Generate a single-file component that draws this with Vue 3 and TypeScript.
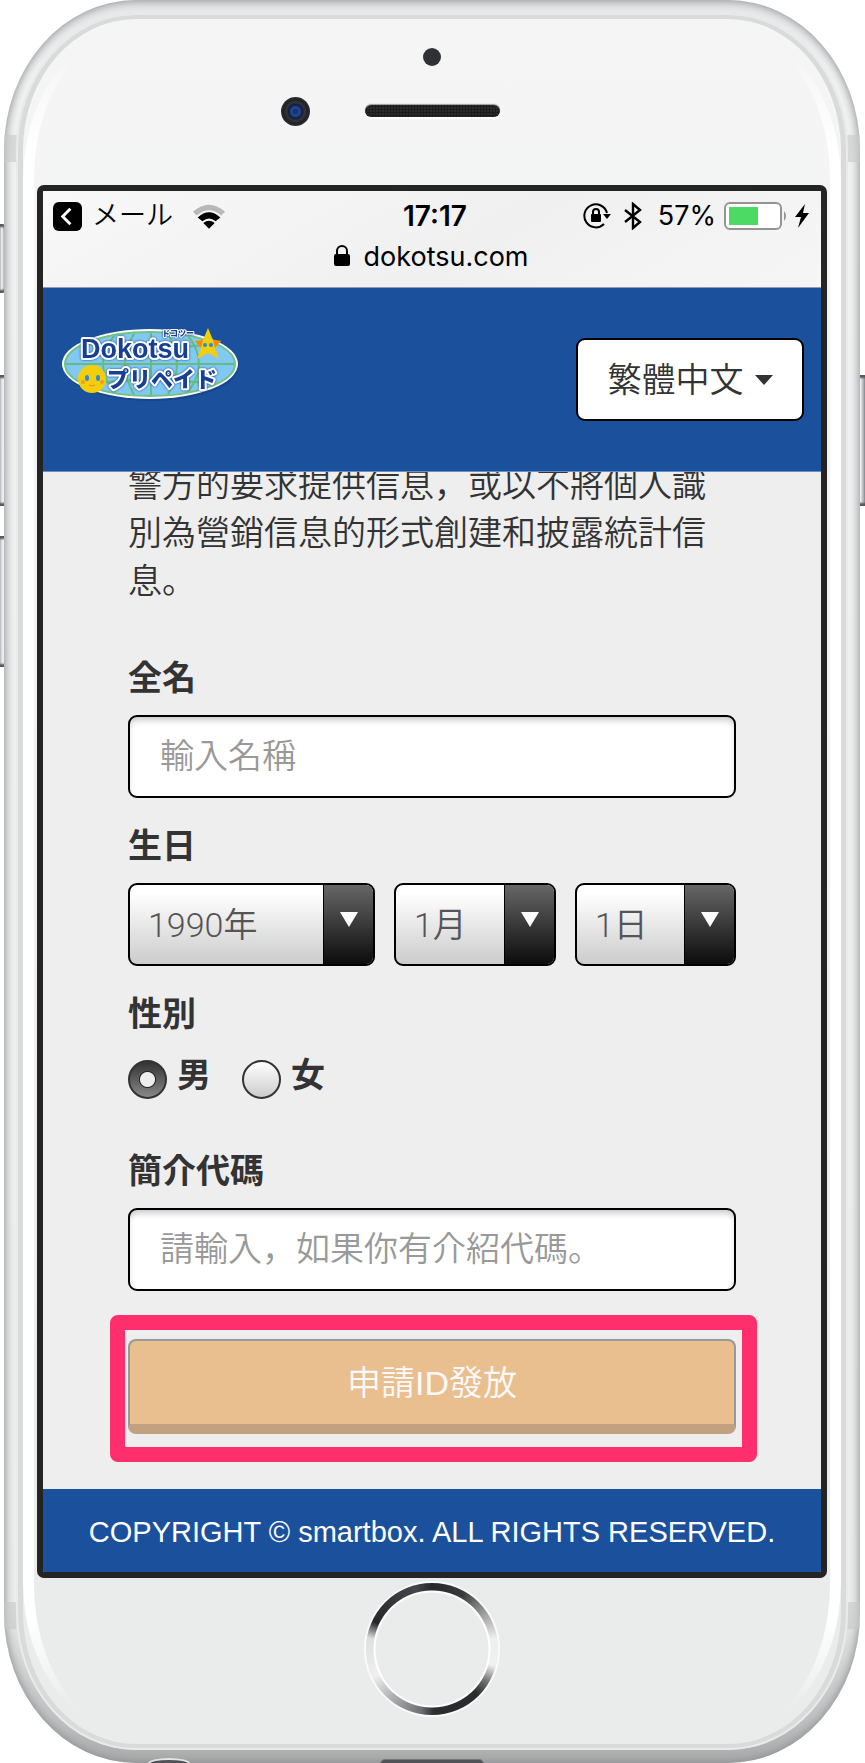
<script setup lang="ts">
import { ref } from 'vue'

interface DateField {
  id: string
  label: string
  value: string
  options: string[]
}

const fullName = ref('')
const referral = ref('')
const gender = ref('male')

const dateFields = ref<DateField[]>([
  { id: 'year', label: '年', value: '1990年', options: ['1989年', '1990年', '1991年'] },
  { id: 'month', label: '月', value: '1月', options: ['1月', '2月', '3月'] },
  { id: 'day', label: '日', value: '1日', options: ['1日', '2日', '3日'] },
])

const genders = [
  { value: 'male', label: '男' },
  { value: 'female', label: '女' },
]
</script>

<template>
  <div class="stage">
    <span class="side-key mute"></span>
    <span class="side-key volume-up"></span>
    <span class="side-key volume-down"></span>
    <span class="side-key power"></span>

    <div class="phone">
      <span class="antenna top-band"></span>
      <span class="antenna bottom-band"></span>
      <div class="rim">
        <div class="glass">
          <div class="forehead">
            <span class="sensor"></span>
            <span class="camera"></span>
            <span class="speaker"></span>
          </div>

          <div class="screen">
            <div class="browser-bar">
              <div class="status">
                <div class="status-side">
                  <svg class="back" viewBox="0 0 30 30" aria-hidden="true">
                    <rect width="30" height="30" rx="6" />
                    <path d="M18 7 L10 15 L18 23" fill="none" stroke="#fff" stroke-width="3" />
                  </svg>
                  <span class="app-name">メール</span>
                  <svg class="wifi" viewBox="0 0 36 26" aria-hidden="true">
                    <path d="M1 8 Q18 -7 35 8 L31 12 Q18 1 5 12 Z" fill="#b8b8b8" />
                    <path d="M6 14 Q18 3 30 14 L25 18 Q18 12 11 18 Z" />
                    <path d="M12 20 Q18 15 24 20 L18 26 Z" />
                  </svg>
                </div>
                <time class="clock">17:17</time>
                <div class="status-side end">
                  <svg class="rotation" viewBox="0 0 28 26" aria-hidden="true">
                    <path d="M21 21 A11.500 11.500 0 1 1 24 10" fill="none" stroke="#000" stroke-width="2" />
                    <path d="M20 11 H28 L24 16 Z" />
                    <rect x="8" y="11" width="10" height="8" rx="1" />
                    <path d="M10 11 V9 a3 3 0 0 1 6 0 V11" fill="none" stroke="#000" stroke-width="2" />
                  </svg>
                  <svg class="bluetooth" viewBox="0 0 18 28" aria-hidden="true">
                    <path d="M1 8 L16 20 L9 26 V2 L16 8 L1 20" fill="none" stroke="#000" stroke-width="2.400" />
                  </svg>
                  <span class="percent">57%</span>
                  <svg class="battery" viewBox="0 0 64 28" aria-hidden="true">
                    <rect x="1" y="1" width="56" height="26" rx="5" fill="#fff" stroke="#949494" stroke-width="2" />
                    <rect x="5" y="5" width="29" height="18" fill="#4cd964" />
                    <path d="M60 9 q4 5 0 10 Z" fill="#949494" />
                  </svg>
                  <svg class="bolt" viewBox="0 0 14 24" aria-hidden="true">
                    <path d="M10 0 L0 13 H6 L3 24 L14 9 H8 Z" />
                  </svg>
                </div>
              </div>
              <div class="address">
                <svg class="lock" viewBox="0 0 16 22" aria-hidden="true">
                  <rect y="9" width="16" height="12" rx="2" />
                  <path d="M3 10 V6 a5 5 0 0 1 10 0 V10" fill="none" stroke="#000" stroke-width="2" />
                </svg>
                <span>dokotsu.com</span>
              </div>
            </div>

            <header class="site-header">
              <a class="logo" href="#" aria-label="Dokotsu プリペイド">
                <svg viewBox="0 0 180 76">
                  <defs>
                    <clipPath id="globe"><ellipse cx="89" cy="38" rx="84" ry="31" /></clipPath>
                  </defs>
                  <ellipse cx="90" cy="40" rx="88" ry="35" fill="#123c7e" opacity="0.500" />
                  <ellipse cx="89" cy="38" rx="88" ry="35" fill="#fff" />
                  <ellipse cx="89" cy="38" rx="85" ry="32" fill="#82c8f4" stroke="#72c282" stroke-width="2" />
                  <g clip-path="url(#globe)" fill="none" stroke="#64bd79" stroke-width="2">
                    <path d="M0 38 H180 M20 17 Q90 27 160 17 M20 59 Q90 49 160 59" />
                    <path d="M90 0 V76 M62 0 Q22 38 62 76 M78 0 Q50 38 78 76 M102 0 Q130 38 102 76 M118 0 Q158 38 118 76" />
                  </g>
                  <g class="logo-text" aria-hidden="true">
                    <text class="latin" x="20" y="32">Dokotsu</text>
                    <text class="ruby" x="101" y="10">ドコツー</text>
                    <text class="kana" x="46" y="61">プリペイド</text>
                  </g>
                  <path d="M147 2 L152 14 L160 15 L154 22 L158 33 L147 27 L136 33 L140 22 L134 15 L142 14 Z" fill="#f3ce0c" />
                  <path d="M134 15 L142 14 L140 22 Z M160 15 L152 14 L154 22 Z" fill="#ee8a16" />
                  <circle cx="144" cy="19" r="2" fill="#2a8ad8" />
                  <circle cx="150" cy="19" r="2" fill="#2a8ad8" />
                  <circle cx="31" cy="53" r="14" fill="#f3ce0c" />
                  <ellipse cx="26" cy="52" rx="2" ry="3" fill="#2a8ad8" />
                  <ellipse cx="37" cy="52" rx="2" ry="3" fill="#2a8ad8" />
                  <path d="M28 59 q3 2 6 0" fill="none" stroke="#ee8a16" />
                  <circle cx="22" cy="56" r="2" fill="#f39b28" />
                  <circle cx="41" cy="56" r="2" fill="#f39b28" />
                </svg>
              </a>
              <button class="language" type="button">
                <span>繁體中文</span>
                <svg viewBox="0 0 18 10" aria-hidden="true"><path d="M0 0 H18 L9 10 Z" fill="#333" /></svg>
              </button>
            </header>

            <main class="page">
              <p class="policy">警方的要求提供信息，或以不將個人識別為營銷信息的形式創建和披露統計信息。</p>

              <form class="form" @submit.prevent>
                <div class="field">
                  <label class="caption" for="full-name">全名</label>
                  <input id="full-name" v-model="fullName" class="text-box" type="text" placeholder="輸入名稱" />
                </div>

                <fieldset class="field">
                  <legend class="caption">生日</legend>
                  <div class="dates">
                    <div v-for="field in dateFields" :key="field.id" class="picker">
                      <select v-model="field.value" :aria-label="field.label">
                        <option v-for="option in field.options" :key="option">{{ option }}</option>
                      </select>
                      <span class="picker-arrow">
                        <svg viewBox="0 0 18 15" aria-hidden="true"><path d="M0 0 H18 L9 15 Z" fill="#fff" /></svg>
                      </span>
                    </div>
                  </div>
                </fieldset>

                <fieldset class="field gender">
                  <legend class="caption">性別</legend>
                  <div class="choices">
                    <label v-for="item in genders" :key="item.value" class="choice">
                      <input v-model="gender" type="radio" name="gender" :value="item.value" />
                      <span>{{ item.label }}</span>
                    </label>
                  </div>
                </fieldset>

                <div class="field">
                  <label class="caption" for="referral">簡介代碼</label>
                  <input id="referral" v-model="referral" class="text-box" type="text" placeholder="請輸入，如果你有介紹代碼。" />
                </div>

                <div class="highlight">
                  <button class="submit" type="submit">申請ID發放</button>
                </div>
              </form>
            </main>

            <footer class="site-footer">COPYRIGHT © smartbox. ALL RIGHTS RESERVED.</footer>
          </div>

          <div class="chin">
            <span class="home"></span>
          </div>
        </div>
      </div>
      <span class="jack"></span>
      <span class="port"></span>
    </div>
  </div>
</template>

<style>
body {
  background: #fff;
}
</style>

<style scoped>
* {
  box-sizing: border-box;
}

.stage {
  position: relative;
  padding: 0 5px 0 4px;
  overflow: hidden;
  color: #333;
  font-family: "Liberation Sans", "Noto Sans CJK JP", "Noto Sans CJK TC", sans-serif;
}

/* Handset body */
.side-key {
  position: absolute;
  left: 0;
  width: 8px;
  border-radius: 0 3px 3px 0;
  background: linear-gradient(90deg, #c4c6c9, #f4f4f4 40%, #8d9094);
  box-shadow: inset 0 4px 2px -1px #55585c, inset 0 -4px 2px -1px #55585c;
}

.mute {
  top: 224px;
  width: 5px;
  height: 69px;
}

.volume-up {
  top: 375px;
  height: 131px;
}

.volume-down {
  top: 536px;
  height: 131px;
}

.power {
  top: 375px;
  right: 0;
  left: auto;
  height: 131px;
  border-radius: 3px 0 0 3px;
}

.phone {
  position: relative;
  overflow: hidden;
  padding: 13px 12px;
  border-radius: 132px / 150px;
  background: linear-gradient(#e6e7e8, #f1f2f2 80px, #eceeee 1600px, #bfc1c1 1720px, #a9abab);
  box-shadow: inset 0 0 10px 1px #8c8e91;
}

.antenna {
  position: absolute;
  right: 0;
  left: 0;
  height: 27px;
  background: #c6c9c8;
  opacity: 0.6;
}

.top-band {
  top: 135px;
}

.bottom-band {
  bottom: 134px;
}

.rim {
  position: relative;
  padding: 6px 7px;
  border-radius: 120px / 137px;
  background: #d9dbdb;
  box-shadow: inset 0 0 0 2px #e9ebeb;
}

.glass {
  position: relative;
  padding: 0 14px;
  border-radius: 113px / 131px;
  background: linear-gradient(#f5f5f5, #f3f4f4 20%, #eaecec 85%);
}

.glass::before {
  content: "";
  position: absolute;
  inset: 10px 0;
  border-right: 11px solid #fff;
  border-left: 11px solid #fff;
  border-radius: 113px / 150px;
  mask-image: linear-gradient(transparent 20px, #000 120px, #000 calc(100% - 120px), transparent calc(100% - 20px));
}

.forehead {
  position: relative;
  height: 166px;
}

.sensor {
  position: absolute;
  top: 29px;
  left: calc(50% - 9px);
  width: 18px;
  height: 18px;
  border-radius: 50%;
  background: #303135;
}

.camera {
  position: absolute;
  top: 78px;
  left: calc(50% - 151px);
  width: 29px;
  height: 29px;
  border-radius: 50%;
  background: radial-gradient(circle, #16336f 0 2px, #244a9b 4px, #111c3d 7px, #35363a 9px, #202124 12px, #55565a);
}

.speaker {
  position: absolute;
  top: 86px;
  left: calc(50% - 67px);
  width: 135px;
  height: 12px;
  border-radius: 6px;
  background: radial-gradient(circle, #1c1c1c 1px, #464646 2px) 0 0 / 3px 3px;
  box-shadow: 0 -1px 1px #9a9a9a, 0 2px 1px #fff;
}

.chin {
  display: flex;
  justify-content: center;
  height: 166px;
  padding-top: 5px;
}

.home {
  width: 132px;
  height: 132px;
  border-radius: 50%;
  background:
    radial-gradient(circle, #eaecec 56px, #fff 57px, #fff 58px, transparent 59px),
    conic-gradient(#26272a, #3a3b3c 30deg, #8a8a8b 50deg, #eee 80deg, #f0f0f1 105deg, #777 120deg, #2b2c2e 135deg, #2b2c2e 178deg, #6f7074 190deg, #aeb0b1 220deg, #f0f0f1 245deg, #dedee0 280deg, #26272a 295deg, #45464b 345deg, #26272a);
  box-shadow: 0 0 0 2px #fafafa;
}

.jack,
.port {
  position: absolute;
  bottom: -6px;
  background: #505257;
}

.jack {
  left: 144px;
  width: 42px;
  height: 11px;
  border: 2px solid #e5e5e5;
  border-radius: 50% 50% 0 0;
}

.port {
  left: calc(50% - 52px);
  width: 104px;
  height: 10px;
  border: 1px solid #777;
  border-radius: 8px;
}

/* Screen */
.screen {
  position: relative;
  overflow: hidden;
  border: 6px solid #242424;
  border-radius: 7px;
  background: #eee;
}

.browser-bar {
  height: 97px;
  padding: 9px 12px 0 10px;
  border-bottom: 1px solid #8f9bb0;
  background: linear-gradient(150deg, #f8f8f8, #f0f0f0 55%, #f6f6f6);
  color: #000;
  font-family: Inter, "Noto Sans CJK JP", sans-serif;
}

.status {
  display: grid;
  grid-template-columns: 1fr auto 1fr;
  align-items: center;
  height: 32px;
}

.status-side {
  display: flex;
  align-items: center;
}

.end {
  justify-content: flex-end;
}

.back {
  width: 29px;
  height: 29px;
}

.app-name {
  margin-left: 10px;
  font-size: 27px;
  font-weight: 350;
  line-height: 32px;
}

.wifi {
  width: 34px;
  height: 25px;
  margin-left: 19px;
}

.clock {
  padding-left: 8px;
  font-size: 28px;
  font-weight: 600;
  line-height: 32px;
}

.rotation {
  width: 28px;
  height: 26px;
}

.bluetooth {
  width: 18px;
  height: 28px;
  margin-left: 13px;
}

.percent {
  margin-left: 16px;
  font-size: 27px;
  line-height: 32px;
}

.battery {
  width: 64px;
  height: 28px;
  margin-left: 8px;
}

.bolt {
  width: 14px;
  height: 24px;
  margin-left: 7px;
}

.address {
  display: flex;
  justify-content: center;
  align-items: center;
  gap: 14px;
  height: 48px;
  font-size: 27px;
}

.lock {
  width: 16px;
  height: 22px;
}

.site-header {
  display: flex;
  justify-content: space-between;
  align-items: flex-start;
  height: 184px;
  padding: 38px 17px 0 18px;
  border-bottom: 1px solid #6c90c6;
  background: #1b509d;
}

.logo svg {
  display: block;
  width: 180px;
  height: 76px;
}

.logo-text {
  filter: drop-shadow(0 0 1px #173f92);
}

.logo-text text {
  fill: #173f92;
  stroke: #fff;
  stroke-width: 4px;
  stroke-linejoin: round;
  paint-order: stroke;
  font-family: "Noto Sans CJK JP", sans-serif;
  font-weight: 900;
}

.logo-text .latin {
  font-family: "Liberation Sans", sans-serif;
  font-size: 27px;
}

.logo-text .kana {
  font-size: 22px;
}

.logo-text .ruby {
  font-size: 8px;
  stroke-width: 2px;
}

.language {
  display: flex;
  justify-content: center;
  align-items: center;
  gap: 11px;
  width: 228px;
  height: 83px;
  margin-top: 12px;
  padding: 0;
  border: 2px solid #000;
  border-radius: 9px;
  background: #fff;
  color: #333;
  font: 350 34px/48px "Liberation Sans", "Noto Sans CJK JP", "Noto Sans CJK TC", sans-serif;
}

.language svg {
  width: 18px;
  height: 10px;
}

.page {
  overflow: hidden;
  padding: 0 85px 27px;
}

.policy {
  margin: -11px 0 49px;
  font-size: 34px;
  font-weight: 350;
  line-height: 48px;
}

.field {
  margin: 0 0 24px;
  padding: 0;
  border: 0;
}

.caption {
  display: block;
  margin-bottom: 13px;
  padding: 0;
  font-size: 34px;
  font-weight: 700;
  line-height: 48px;
}

.text-box {
  display: block;
  width: 100%;
  height: 83px;
  padding: 0 30px;
  border: 2px solid #000;
  border-radius: 9px;
  background: #fff;
  box-shadow: inset 0 5px 6px -2px #c9c6ca;
  color: #333;
  font: 350 34px/48px "Liberation Sans", "Noto Sans CJK JP", "Noto Sans CJK TC", sans-serif;
}

.text-box::placeholder {
  color: #999;
  opacity: 1;
}

.dates {
  display: grid;
  grid-template-columns: 247fr 162fr 161fr;
  gap: 19px;
}

.picker {
  display: flex;
  overflow: hidden;
  position: relative;
  height: 83px;
  border: 2px solid #000;
  border-radius: 9px;
  background: linear-gradient(#fff 10%, #ccc);
}

.picker select {
  flex: 1;
  min-width: 0;
  padding: 0 0 0 18px;
  border: 0;
  appearance: none;
  background: transparent;
  color: #555;
  font: 350 34px/48px Roboto, "Noto Sans CJK JP", sans-serif;
}

.picker-arrow {
  display: flex;
  justify-content: center;
  width: 50px;
  padding-top: 27px;
  border-left: 1px solid #000;
  background: linear-gradient(#666, #0c0c0c);
  pointer-events: none;
}

.picker-arrow svg {
  width: 18px;
  height: 15px;
}

.gender {
  margin-bottom: 48px;
}

.choices {
  display: flex;
  gap: 31px;
}

.choice {
  display: flex;
  align-items: flex-end;
  gap: 10px;
  height: 48px;
  font-size: 34px;
  font-weight: 700;
}

.choice span {
  align-self: flex-start;
  line-height: 48px;
}

.choice input {
  width: 39px;
  height: 39px;
  margin: 0;
  border: 2px solid #333;
  border-radius: 50%;
  appearance: none;
  background: linear-gradient(#fff, #ccc);
}

.choice input:checked {
  background:
    radial-gradient(circle, #eee 7px, #222 8px, transparent 9px),
    linear-gradient(#333, #888);
}

.highlight {
  margin: 0 -21px 0 -18px;
  padding: 9px 6px 13px 3px;
  border: 15px solid #ff2e6d;
  border-radius: 8px;
}

.submit {
  display: block;
  width: 100%;
  height: 95px;
  padding: 0;
  border: 2px solid #999;
  border-bottom: 10px solid #c2a181;
  border-radius: 8px;
  background: #eabf90;
  color: #fafafa;
  font: 350 34px/48px "Liberation Sans", "Noto Sans CJK JP", sans-serif;
}

.site-footer {
  height: 83px;
  background: #1b509d;
  color: #fff;
  font-size: 29px;
  line-height: 86px;
  text-align: center;
  white-space: nowrap;
}
</style>
